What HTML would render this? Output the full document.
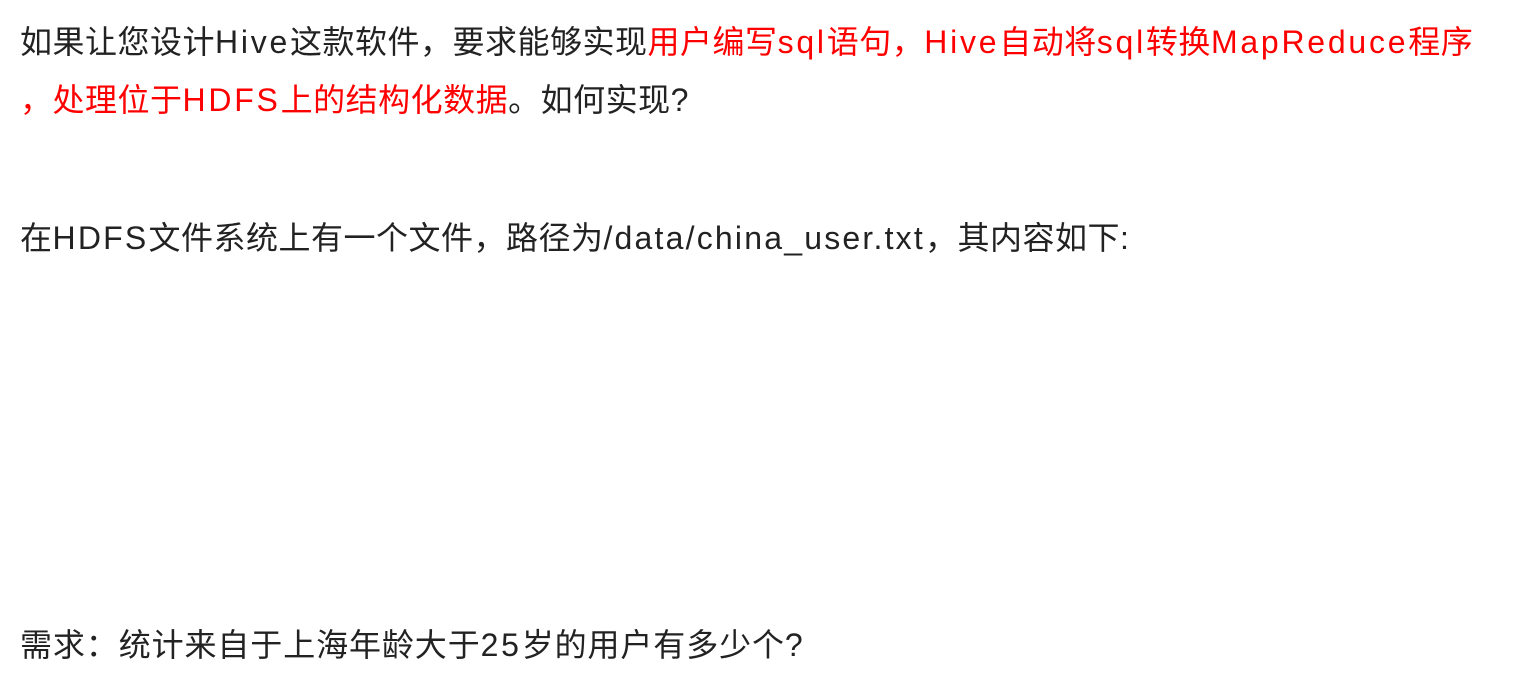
<!DOCTYPE html>
<html><head><meta charset="utf-8"><style>
html,body{margin:0;padding:0;background:#fff;width:1517px;height:692px;overflow:hidden}
.l{position:absolute;left:20px;white-space:nowrap;font-family:"Liberation Sans","Noto Sans CJK SC",sans-serif;font-size:32px;color:#222;line-height:40px;letter-spacing:0.5px}
.r{color:#f00}
.e{letter-spacing:2.75px}
</style></head><body>
<div class="l" style="top:22px">如果让您设计<span class="e">Hive</span>这款软件，要求能够实现<span class="r">用户编写<span class="e">sql</span>语句，<span class="e">Hive</span>自动将<span class="e">sql</span>转换<span class="e">MapReduce</span>程序</span></div>
<div class="l" style="top:80px"><span class="r">，处理位于<span class="e">HDFS</span>上的结构化数据</span>。如何实现?</div>
<div class="l" style="top:218px">在<span class="e" style="letter-spacing:2.2px">HDFS</span>文件系统上有一个文件，路径为<span class="e" style="letter-spacing:2.2px">/data/china_user.txt</span>，其内容如下:</div>
<div class="l" style="top:625px;letter-spacing:0.9px">需求：统计来自于上海年龄大于<span class="e">25</span>岁的用户有多少个?</div>
</body></html>
